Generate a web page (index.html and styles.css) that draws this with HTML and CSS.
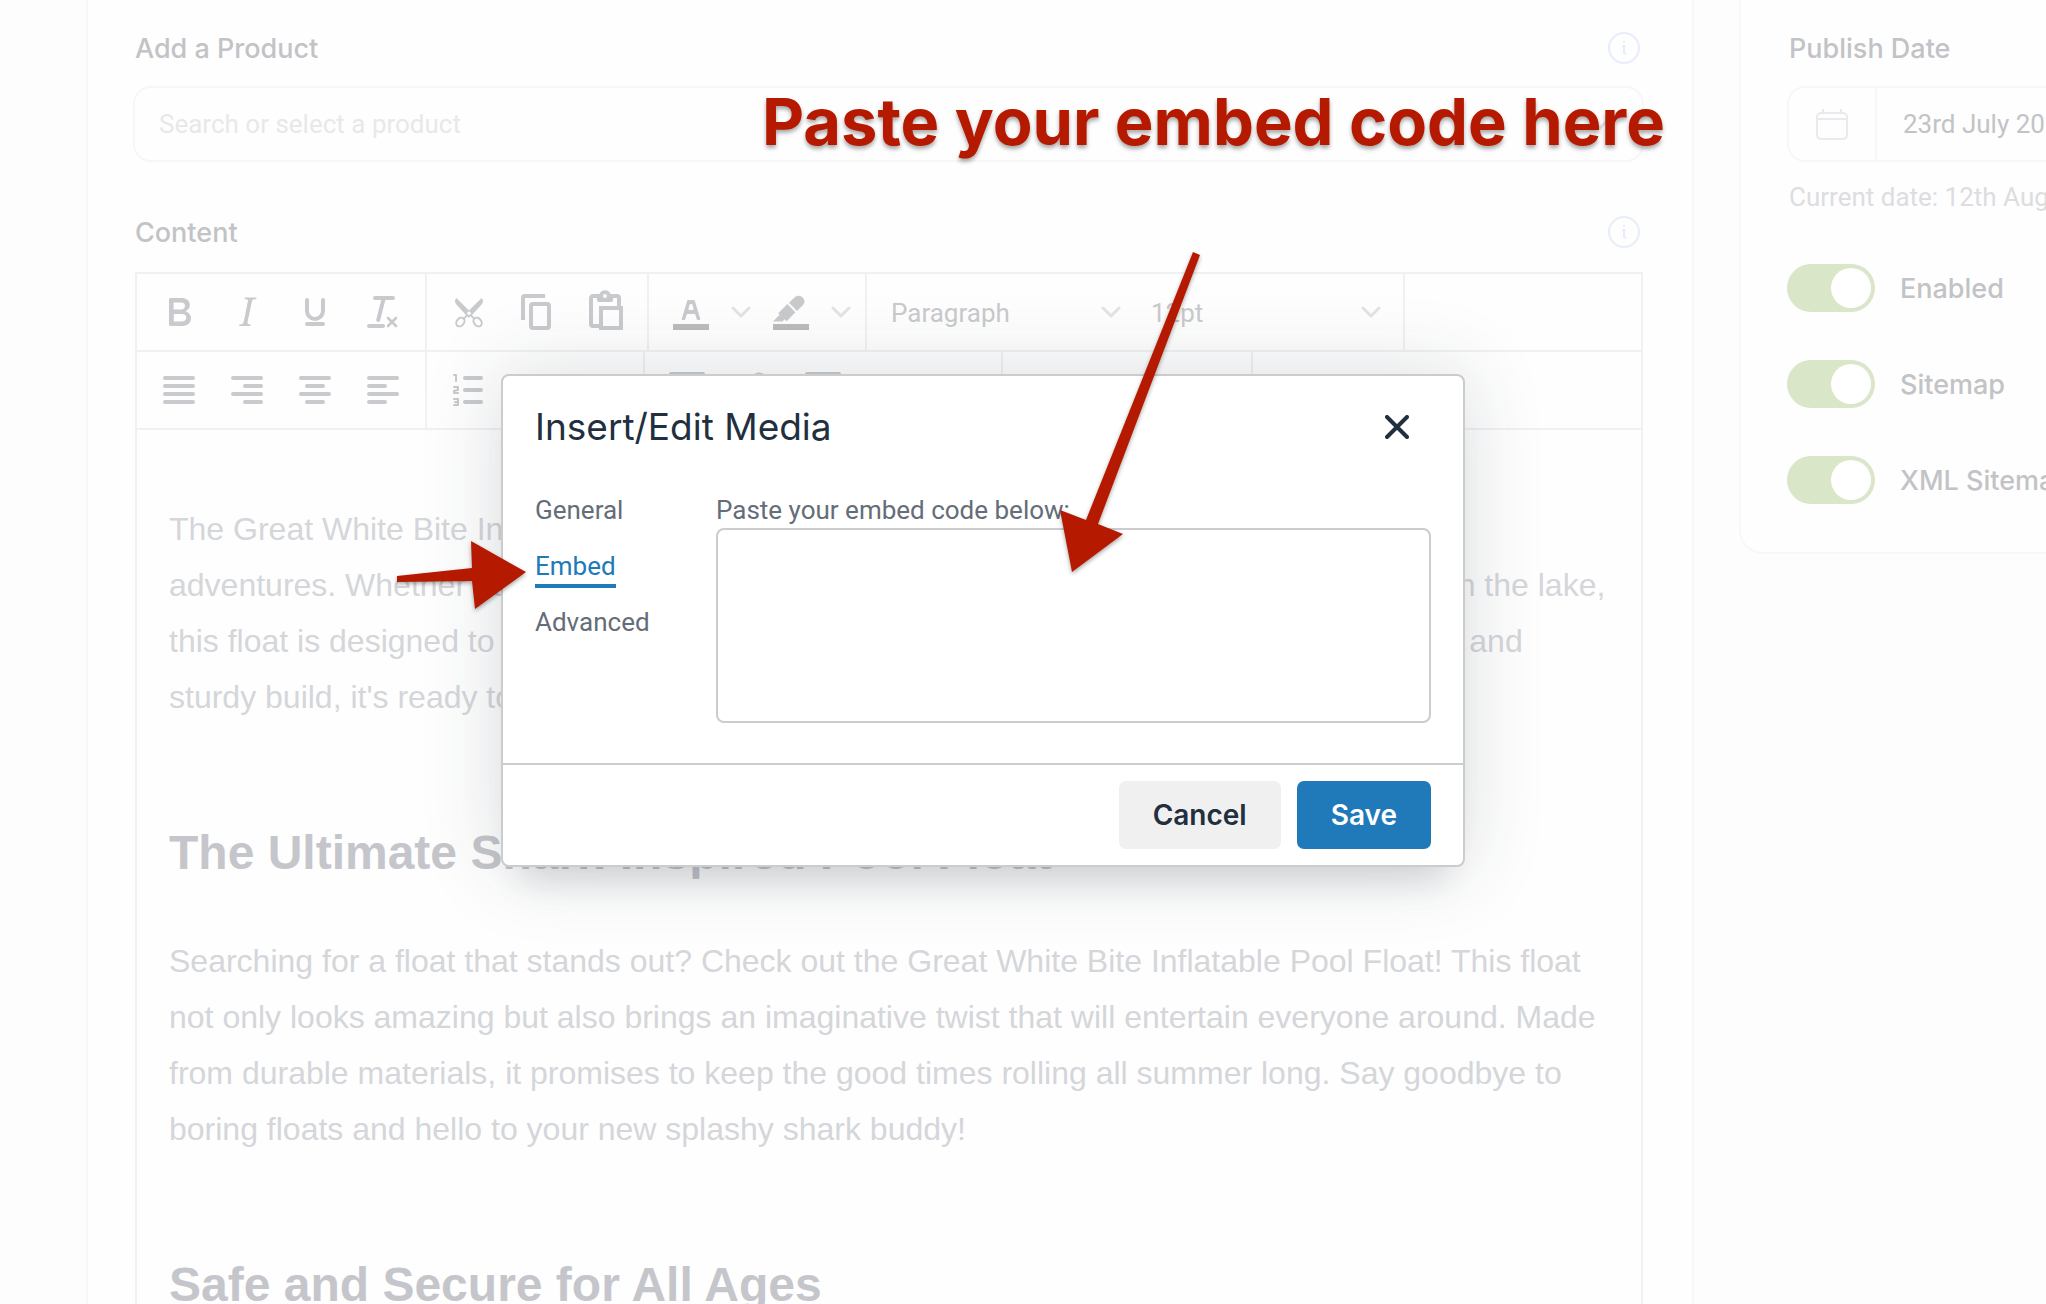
FILE: index.html
```html
<!DOCTYPE html>
<html lang="en">
<head>
  <meta charset="UTF-8" />
  <meta name="viewport" content="width=device-width, initial-scale=1.0" />
  <title>Edit Post</title>
  <link rel="stylesheet" href="styles.css">
</head>
<body>
  <div class="page">
    <main class="card main-card">
      <div class="label-row">
        <label for="product">Add a Product</label>
        <button class="info" aria-label="Product help"><svg viewBox="0 0 32 32"><circle cx="16" cy="16" r="15"/><path d="M16 9v2M14 14h2v7l2 1"/></svg></button>
      </div>
      <div class="search-box">
        <input type="text" id="product" placeholder="Search or select a product">
        <svg class="chevron" viewBox="0 0 20 20"><path d="M2 6l8 8 8-8"/></svg>
      </div>

      <div class="label-row content-label">
        <label for="editor">Content</label>
        <button class="info" aria-label="Content help"><svg viewBox="0 0 32 32"><circle cx="16" cy="16" r="15"/><path d="M16 9v2M14 14h2v7l2 1"/></svg></button>
      </div>

      <div class="editor">
        <div class="toolbar">
          <div class="group">
            <button aria-label="Bold"><svg viewBox="0 0 24 24"><path d="M7.800 19c-.3 0-.5 0-.6-.2l-.2-.5V5.700c0-.2 0-.4.2-.5l.6-.2h5c1.500 0 2.700.3 3.500 1 .7.6 1.100 1.400 1.100 2.500a3 3 0 0 1-.6 1.900c-.4.6-1 1-1.600 1.200.4.1.9.3 1.300.6s.8.7 1 1.200c.4.4.5 1 .5 1.600 0 1.300-.4 2.300-1.300 3-.8.7-2.100 1-3.800 1H7.800Zm5-8.300c.6 0 1.200-.1 1.600-.5.4-.3.6-.7.6-1.300 0-1.100-.8-1.700-2.300-1.700H9.300v3.500h3.400Zm.5 6c.7 0 1.300-.1 1.700-.4.4-.4.6-.9.6-1.500s-.2-1-.7-1.400c-.4-.3-1-.4-2-.4H9.400v3.800h4Z"/></svg></button>
            <button aria-label="Italic"><svg viewBox="0 0 24 24"><path d="m16.700 4.700-.1.9h-.3c-.6 0-1 0-1.400.3-.3.3-.4.6-.5 1.100l-2.100 9.800v.6c0 .5.4.8 1.400.8h.2l-.2.8H8l.2-.8h.2c1.100 0 1.800-.5 2-1.500l2-9.800.1-.5c0-.6-.4-.8-1.400-.8h-.3l.2-.9h5.700Z"/></svg></button>
            <button aria-label="Underline"><svg viewBox="0 0 24 24"><path class="line" d="M8 6v5.500a4 4 0 0 0 8 0V6M8 18h8"/></svg></button>
            <button aria-label="Clear formatting"><svg viewBox="0 0 24 24"><path class="line" d="M8 5h9M12.400 5 9.600 16M5 19h7"/><path class="line thin" d="m14.500 15 4 4m0-4-4 4"/></svg></button>
          </div>
          <div class="group">
            <button aria-label="Cut"><svg viewBox="0 0 24 24"><path d="m10.700 13.700-5.200-5.700c-.7-1-.7-2 .2-3L12 11.300 18.300 5c.9 1 .9 2 .2 3l-5.200 5.700-1.300 1.200Z"/><ellipse class="line mid" cx="7.700" cy="17" rx="1.800" ry="2.400" transform="rotate(40 7.700 17)"/><ellipse class="line mid" cx="16.300" cy="17" rx="1.800" ry="2.400" transform="rotate(-40 16.300 17)"/><path class="line mid" d="m9.400 15.300 2-2m3.200 2-2-2"/><circle class="hole" cx="12" cy="12.600" r=".9"/></svg></button>
            <button aria-label="Copy"><svg viewBox="0 0 24 24"><path d="M16 3H6a2 2 0 0 0-2 2v11h2V5h10V3Zm1 4a2 2 0 0 1 2 2v10a2 2 0 0 1-2 2h-7a2 2 0 0 1-2-2V9c0-1.200.9-2 2-2h7Zm0 12V9h-7v10h7Z"/></svg></button>
            <button aria-label="Paste"><svg viewBox="0 0 24 24"><path fill-rule="evenodd" d="M18 9V5h-2v1a1 1 0 0 1-1 1H9a1 1 0 0 1-1-1V5H6v13h3v2H6a2 2 0 0 1-2-2V5c0-1.100.9-2 2-2h3.200a3 3 0 0 1 5.600 0H18a2 2 0 0 1 2 2v4h1v12H9V9h9Zm1 2h-8v8h8v-8ZM12 3a1 1 0 1 0 0 2 1 1 0 0 0 0-2Z"/></svg></button>
          </div>
          <div class="group">
            <button aria-label="Text colour"><svg viewBox="0 0 24 24"><path fill="#bcbcbe" d="M3 18h18v3H3z"/><path d="M8.700 16h-.8a.5.5 0 0 1-.5-.6l2.700-9c.1-.3.3-.4.5-.4h2.800c.2 0 .4.1.5.4l2.700 9a.5.5 0 0 1-.5.6h-.8a.5.5 0 0 1-.4-.4l-.7-2.200c0-.3-.3-.4-.5-.4h-3.400c-.2 0-.4.1-.5.4l-.7 2.200c0 .3-.2.4-.4.4Zm2.600-7.600-.6 2a.5.5 0 0 0 .5.6h1.600a.5.5 0 0 0 .5-.6l-.6-2c0-.3-.3-.4-.5-.4h-.4c-.2 0-.4.1-.5.4Z"/></svg></button>
            <button class="split" aria-label="Text colour menu"><svg class="chevron" viewBox="0 0 20 20"><path d="M2 6l8 8 8-8"/></svg></button>
            <button aria-label="Background colour"><svg viewBox="0 0 24 24"><path fill="#bcbcbe" d="M3 18h18v3H3z"/><path d="M7.700 16.700H3l3.300-3.300-.7-.8L10.200 8l4 4.100-4 4.200c-.2.2-.6.2-.8 0l-.6-.7-1.100 1.100Zm3.300-9.300 3-2.900a3 3 0 0 1 3.600 0l.4.500c1 1 1 2.500 0 3.500l-3 3-4-4.100Z"/></svg></button>
            <button class="split" aria-label="Background colour menu"><svg class="chevron" viewBox="0 0 20 20"><path d="M2 6l8 8 8-8"/></svg></button>
          </div>
          <div class="group">
            <div class="pick">
              <select aria-label="Block format"><option>Paragraph</option><option>Heading 2</option></select>
              <svg class="chevron" viewBox="0 0 20 20"><path d="M2 6l8 8 8-8"/></svg>
            </div>
            <div class="pick">
              <select aria-label="Font size"><option>12pt</option><option>14pt</option></select>
              <svg class="chevron" viewBox="0 0 20 20"><path d="M2 6l8 8 8-8"/></svg>
            </div>
          </div>
        </div>
        <div class="toolbar">
          <div class="group">
            <button aria-label="Justify"><svg viewBox="0 0 24 24"><path class="line" d="M5 6h14M5 10h14M5 14h14M5 18h14"/></svg></button>
            <button aria-label="Align right"><svg viewBox="0 0 24 24"><path class="line" d="M5 6h14M11 10h8M5 14h14M11 18h8"/></svg></button>
            <button aria-label="Align centre"><svg viewBox="0 0 24 24"><path class="line" d="M5 6h14M8 10h8M5 14h14M8 18h8"/></svg></button>
            <button aria-label="Align left"><svg viewBox="0 0 24 24"><path class="line" d="M5 6h14M5 10h8M5 14h14M5 18h8"/></svg></button>
          </div>
          <div class="group">
            <button aria-label="Numbered list"><svg viewBox="0 0 24 24"><path class="line" d="M10 6h8M10 12h8M10 18h8"/><path class="line hair" d="M4.500 4.500h1v3M4.500 10.500h2v1.400l-2 .6v1h2M4.500 16.500h2v3h-2M5 18h1.500"/></svg></button>
            <button class="split" aria-label="Numbered list menu"><svg class="chevron" viewBox="0 0 20 20"><path d="M2 6l8 8 8-8"/></svg></button>
            <button aria-label="Bullet list"><svg viewBox="0 0 24 24"><path class="line" d="M11 6h8M11 12h8M11 18h8M5 6h1M5 12h1M5 18h1"/></svg></button>
            <button class="split" aria-label="Bullet list menu"><svg class="chevron" viewBox="0 0 20 20"><path d="M2 6l8 8 8-8"/></svg></button>
          </div>
          <div class="group">
            <button aria-label="Media"><svg viewBox="0 0 24 24"><path fill-rule="evenodd" d="M4 3h16a1 1 0 0 1 1 1v16a1 1 0 0 1-1 1H4a1 1 0 0 1-1-1V4a1 1 0 0 1 1-1Zm1 2v14h14V5H5Z"/></svg></button>
            <button aria-label="Link"><svg viewBox="0 0 24 24"><path class="line" d="m10 7 2-2a3 3 0 0 1 4 0l2 2a3 3 0 0 1 0 4l-2 2M8 11l-2 2a3 3 0 0 0 0 4l1 1a3 3 0 0 0 4 0l2-2"/></svg></button>
            <button aria-label="Image"><svg viewBox="0 0 24 24"><path fill-rule="evenodd" d="M4 3h16a1 1 0 0 1 1 1v16a1 1 0 0 1-1 1H4a1 1 0 0 1-1-1V4a1 1 0 0 1 1-1Zm1 2v14h14V5H5Z"/></svg></button>
          </div>
          <div class="group"></div>
        </div>
        <div class="content" id="editor" contenteditable="true">
          <p>The Great White Bite Inflatable Pool Float is the perfect companion for your summer<br>adventures. Whether you're lounging in the family pool or enjoying a lovely sunny day out on the lake,<br>this float is designed to turn heads and bring the fun. With a bold shark design, comfy seats and<br>sturdy build, it's ready to make a splash at your next party!</p>
          <h2>The Ultimate Shark-Inspired Pool Float</h2>
          <p>Searching for a float that stands out? Check out the Great White Bite Inflatable Pool Float! This float<br>not only looks amazing but also brings an imaginative twist that will entertain everyone around. Made<br>from durable materials, it promises to keep the good times rolling all summer long. Say goodbye to<br>boring floats and hello to your new splashy shark buddy!</p>
          <h2>Safe and Secure for All Ages</h2>
        </div>
      </div>
    </main>

    <aside class="card side-card">
      <div class="label-row"><label for="date">Publish Date</label></div>
      <div class="date-box">
        <span class="date-icon"><svg viewBox="0 0 34 34"><path d="M6 6h22a4 4 0 0 1 4 4v18a4 4 0 0 1-4 4H6a4 4 0 0 1-4-4V10a4 4 0 0 1 4-4ZM2 12h30M8 2v4M26 2v4"/></svg></span>
        <input type="text" id="date" value="23rd July 2024">
      </div>
      <p class="hint">Current date: 12th August 2024</p>
      <label class="toggle"><input type="checkbox" checked> Enabled</label>
      <label class="toggle"><input type="checkbox" checked> Sitemap</label>
      <label class="toggle"><input type="checkbox" checked> XML Sitemap</label>
    </aside>
  </div>

  <div class="modal" role="dialog" aria-labelledby="modal-title">
    <div class="modal-header">
      <h1 id="modal-title">Insert/Edit Media</h1>
      <button class="close" aria-label="Close"><svg viewBox="0 0 24 24"><path d="M2 2l20 20M22 2L2 22"/></svg></button>
    </div>
    <div class="modal-body">
      <nav class="tabs">
        <a href="#general">General</a>
        <a href="#embed" class="active">Embed</a>
        <a href="#advanced">Advanced</a>
      </nav>
      <div class="embed">
        <label for="code">Paste your embed code below:</label>
        <textarea id="code"></textarea>
      </div>
    </div>
    <div class="modal-footer">
      <button class="btn">Cancel</button>
      <button class="btn primary">Save</button>
    </div>
  </div>

  <div class="callout">Paste your embed code here</div>
  <svg class="arrow arrow-down" viewBox="0 0 150 330"><path d="M139 4l7 3L44 276l25 10-51 38L6 262l26 10Z"/></svg>
  <svg class="arrow arrow-right" viewBox="0 0 140 80"><path d="M7 43l75-8-1-27 55 31-51 37-3-28-75 1Z"/></svg>
</body>
</html>
```

FILE: styles.css
```css
* { box-sizing: border-box; }
body { margin: 0; height: 100vh; overflow: hidden; position: relative; background: #fdfdfd; font-family: Roboto, sans-serif; font-size: 26px; color: #c2c3c6; }
button, input, select, textarea { font: inherit; color: inherit; background: none; border: none; margin: 0; padding: 0; }
button { cursor: pointer; }
svg { display: block; fill: none; }

.page { display: grid; grid-template-columns: minmax(0, 1fr) 307px; gap: 45px; padding-left: 86px; height: 100vh; }
.card { background: #fefefe; border: 2px solid #f8f8f9; border-top: none; }
.main-card { padding: 28px 48px 0 45px; border-bottom: none; overflow: hidden; }
.side-card { align-self: start; padding: 28px 0 48px 46px; border-right: none; border-radius: 0 0 0 24px; white-space: nowrap; overflow: hidden; }

.label-row { display: flex; align-items: center; justify-content: space-between; height: 40px; padding: 0 2px; font-family: Inter, sans-serif; font-size: 27px; font-weight: 500; }
.content-label { margin-top: 50px; }
.info { width: 32px; height: 32px; margin-right: 2px; }
.info svg { width: 32px; height: 32px; stroke: #e6ecfa; stroke-width: 2; }
.search-box, .date-box { display: flex; align-items: center; height: 76px; margin-top: 18px; border: 2px solid #f7f7f8; border-radius: 18px; overflow: hidden; }
.search-box { padding: 0 32px 0 24px; }
.search-box input { flex: 1; outline: none; }
.search-box input::placeholder { color: #e9e8e8; opacity: 1; }
.chevron { width: 20px; height: 20px; stroke: #e2e3e5; stroke-width: 3; stroke-linecap: round; stroke-linejoin: round; }

.editor { margin: 20px 1px 0 2px; border: 2px solid #f1f1f2; min-height: 1100px; }
.toolbar { display: flex; height: 78px; border-bottom: 2px solid #f1f1f2; }
.group { display: flex; align-items: center; padding: 0 8px; border-right: 2px solid #f1f1f2; }
.group:empty { width: 250px; }
.group button { width: 68px; height: 68px; display: flex; align-items: center; justify-content: center; }
.group .split { width: 32px; }
.group button svg:not(.chevron) { width: 48px; height: 48px; fill: #c8cacd; }
.toolbar + .toolbar .group:nth-child(3) { width: 358px; }
.group .line { fill: none; stroke: #c8cacd; stroke-width: 2; stroke-linecap: round; stroke-linejoin: round; }
.group .mid { stroke-width: 1; }
.group .thin { stroke-width: 1.3; }
.group .hair { stroke-width: 1; }
.group .hole { fill: #fdfdfd; }
.pick { position: relative; display: flex; align-items: center; width: 260px; }
.pick select { width: 100%; height: 60px; padding: 2px 0 0 16px; appearance: none; color: #c8cacd; }
.pick .chevron { position: absolute; right: 14px; pointer-events: none; }

.content { padding: 71px 32px; font-family: "Liberation Sans", Arial, sans-serif; font-size: 32px; line-height: 56px; color: #d4d6da; outline: none; white-space: nowrap; }
.content p { margin: 0; }
.content h2 { margin: 98px 0 50px; font-size: 48px; line-height: 60px; color: #c5c6cb; }
.content h2:last-child { margin-bottom: 0; }

.date-icon { display: flex; flex-shrink: 0; align-items: center; justify-content: center; width: 88px; height: 100%; border-right: 2px solid #f7f7f8; }
.date-icon svg { width: 34px; height: 34px; stroke: #e9eaed; stroke-width: 2; }
.date-box { border-right: none; border-radius: 18px 0 0 18px; }
.date-box input { flex: 1; min-width: 0; padding-left: 26px; }
.hint { margin: 16px 2px 48px; line-height: 38px; color: #dcdde1; }
.toggle { display: flex; align-items: center; gap: 25px; height: 48px; font-family: Inter, sans-serif; font-size: 27px; font-weight: 500; }
.toggle + .toggle { margin-top: 48px; }
.toggle input { appearance: none; flex-shrink: 0; width: 88px; height: 48px; padding: 4px; border-radius: 24px; background: #dae6c8; }
.toggle input::before { content: ""; display: block; width: 40px; height: 40px; margin-left: auto; border-radius: 50%; background: #fff; }

.modal { position: absolute; left: 501px; top: 374px; width: 964px; background: #fff; border: 2px solid #ccc; border-radius: 8px; color: #222f3e; box-shadow: 0 32px 32px -20px rgba(34,47,62,0.15), 0 0 80px 2px rgba(34,47,62,0.15); }
.modal-header { display: flex; align-items: center; justify-content: space-between; padding: 26px 54px 0 32px; }
.modal-header h1 { margin: 0; font-family: Inter, sans-serif; font-size: 37px; font-weight: 400; line-height: 50px; }
.close svg { width: 24px; height: 24px; stroke: #222f3e; stroke-width: 4; stroke-linecap: round; }
.modal-body { display: flex; padding: 40px 32px 40px; color: #646d78; }
.tabs { display: flex; flex-direction: column; align-items: flex-start; gap: 16px; width: 181px; }
.tabs a { color: inherit; text-decoration: none; line-height: 36px; border-bottom: 4px solid transparent; }
.tabs a.active { color: #207ab7; border-color: #207ab7; }
.embed { flex: 1; display: flex; flex-direction: column; }
.embed label { line-height: 36px; }
.embed textarea { height: 195px; border: 2px solid #ccc; border-radius: 8px; resize: none; padding: 10px; outline: none; }
.modal-footer { display: flex; justify-content: flex-end; gap: 16px; padding: 16px 32px; border-top: 2px solid #ccc; }
.btn { height: 68px; padding: 0 34px; border-radius: 7px; background: #f0f0f0; font-family: Inter, sans-serif; font-size: 28px; font-weight: 600; color: #222f3e; }
.btn.primary { background: #2079b8; color: #fff; }

.callout { position: absolute; left: 762px; top: 82px; font-family: Inter, sans-serif; font-size: 65px; line-height: 80px; font-weight: 700; color: #b51900; white-space: nowrap; text-shadow: 0 3px 4px rgba(0,0,0,0.35); }
.arrow { position: absolute; fill: #b51900; filter: drop-shadow(0 2px 2px rgba(0,0,0,0.35)); }
.arrow-down { left: 1054px; top: 248px; width: 150px; height: 330px; }
.arrow-right { left: 390px; top: 533px; width: 140px; height: 80px; }
```
